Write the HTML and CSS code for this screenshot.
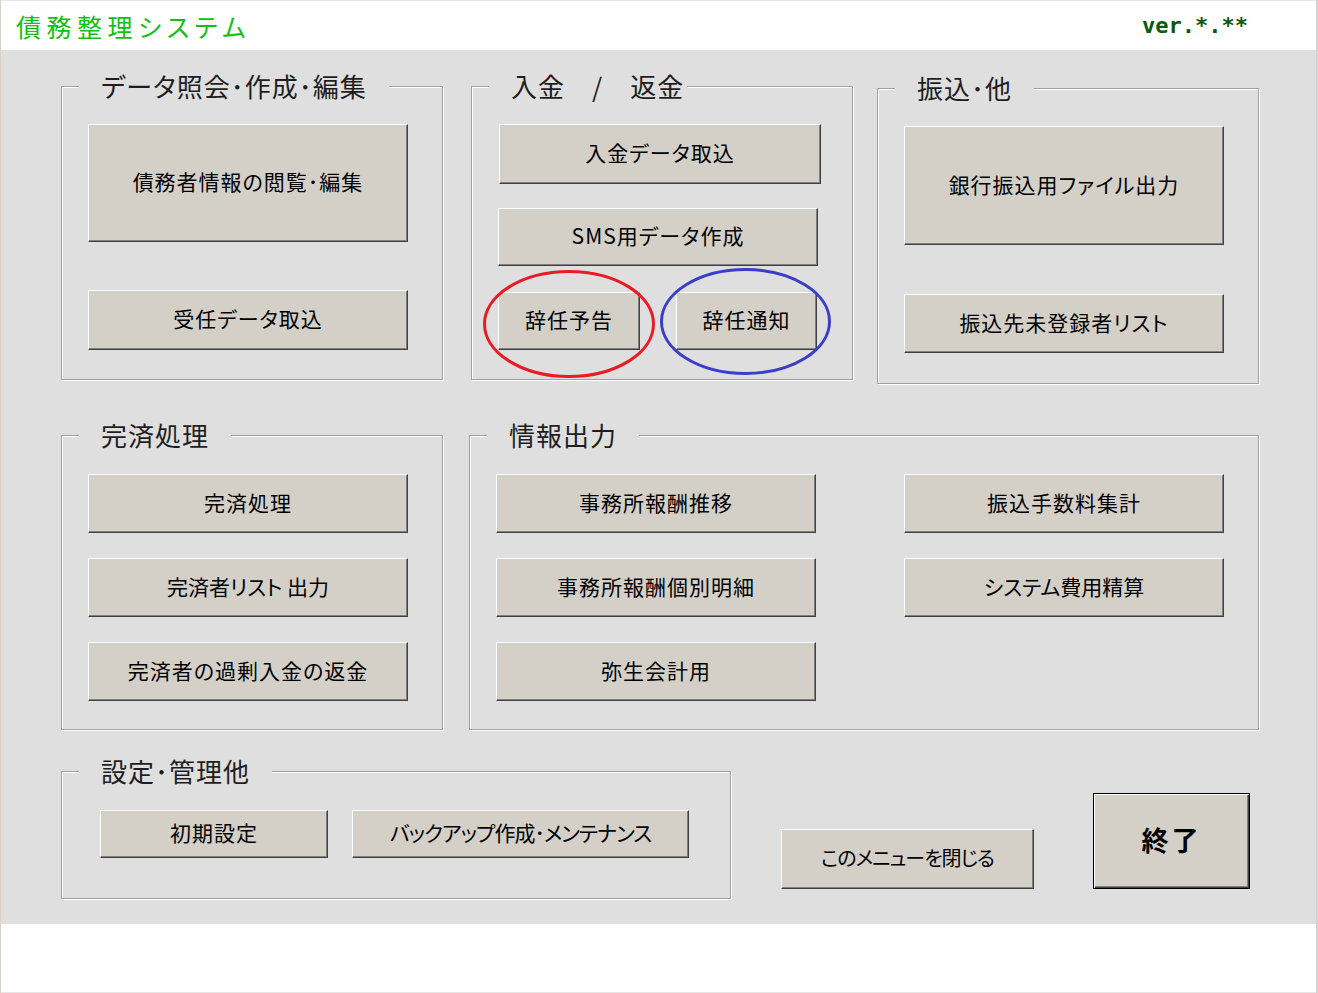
FILE: index.html
```html
<!DOCTYPE html>
<html lang="ja">
<head>
<meta charset="utf-8">
<title>債務整理システム</title>
<link rel="stylesheet" href="styles.css">
</head>
<body>
<div class="app">
  <header class="header">
    <h1 class="title">債務整理システム</h1>
    <span class="ver">ver.*.**</span>
  </header>
  <main class="main">
    <div class="row row1">
      <section class="group g1">
        <span class="legend">データ照会･作成･編集</span>
        <button class="btn w320 h118">債務者情報の閲覧･編集</button>
        <button class="btn w320 h60 mt48">受任データ取込</button>
      </section>
      <section class="group g2">
        <span class="legend legend-tight">入金　/　返金</span>
        <button class="btn w322 h60 ml1">入金データ取込</button>
        <button class="btn w320 h58 mt24">SMS用データ作成</button>
        <div class="pair">
          <button class="btn w142 h58">辞任予告</button>
          <button class="btn w141 h58">辞任通知</button>
        </div>
        <svg class="marks" width="400" height="320" viewBox="0 0 400 320">
          <ellipse cx="98" cy="238" rx="84.5" ry="52.5" fill="none" stroke="#e81c24" stroke-width="3"/>
          <ellipse cx="274.5" cy="235.5" rx="84" ry="52" fill="none" stroke="#3a3ec8" stroke-width="3"/>
        </svg>
      </section>
      <section class="group g3">
        <span class="legend">振込･他</span>
        <button class="btn w320 h119">銀行振込用ファイル出力</button>
        <button class="btn w320 h59 mt49">振込先未登録者リスト</button>
      </section>
    </div>
    <div class="row row2">
      <section class="group g4">
        <span class="legend">完済処理</span>
        <div class="stack">
          <button class="btn w320 h59">完済処理</button>
          <button class="btn w320 h59 snug">完済者リスト 出力</button>
          <button class="btn w320 h59">完済者の過剰入金の返金</button>
        </div>
      </section>
      <section class="group g5">
        <span class="legend">情報出力</span>
        <div class="grid2">
          <button class="btn w320 h59">事務所報酬推移</button>
          <button class="btn w320 h59">振込手数料集計</button>
          <button class="btn w320 h59">事務所報酬個別明細</button>
          <button class="btn w320 h59 snug">システム費用精算</button>
          <button class="btn w320 h59">弥生会計用</button>
        </div>
      </section>
    </div>
    <div class="row row3">
      <section class="group g6">
        <span class="legend">設定･管理他</span>
        <div class="pair6">
          <button class="btn w228 h48">初期設定</button>
          <button class="btn w337 h48 tight">バックアップ作成･メンテナンス</button>
        </div>
      </section>
      <button class="btn close tight">このメニューを閉じる</button>
      <button class="btn btn-default quit">終了</button>
    </div>
  </main>
  <div class="footer"></div>
</div>
</body>
</html>
```
FILE: styles.css
```css
* { box-sizing: border-box; }
html, body { margin: 0; padding: 0; background: #fff; }
body {
  font-family: "Noto Sans CJK JP", "Noto Sans", sans-serif;
  font-feature-settings: "palt";
}
.app {
  width: 1318px;
  height: 993px;
  border-left: 1px solid #d6d2ca;
  border-right: 2px solid #d6d2ca;
  display: flex;
  flex-direction: column;
}
.header {
  height: 50px;
  border-top: 1px solid #e6e6e6;
  background: #fff;
  display: flex;
  align-items: center;
  justify-content: space-between;
  padding: 0 68px 0 15px;
}
.title {
  margin: 0;
  font-size: 25px;
  font-weight: normal;
  letter-spacing: 5.5px;
  color: #12c012;
  line-height: 30px;
}
.ver {
  font-family: "DejaVu Sans Mono", "Liberation Mono", monospace;
  font-weight: bold;
  font-size: 22px;
  line-height: 26px;
  color: #0b5a0b;
  font-feature-settings: normal;
  white-space: nowrap;
}
.main {
  height: 874px;
  background: #dfdfdf;
  padding: 36px 0 0 60px;
}
.row { display: flex; align-items: flex-start; }
.row2 { margin-top: 51px; }
.row3 { margin-top: 41px; }

.group {
  position: relative;
  border: 1px solid #a0a0a0;
  box-shadow: inset 1px 1px 0 #fff, 1px 1px 0 #fff;
  padding: 37px 0 0 26px;
  display: flex;
  flex-direction: column;
  align-items: flex-start;
}
.legend {
  position: absolute;
  left: 17px;
  top: -16px;
  padding: 0 22px;
  background: #dfdfdf;
  font-size: 26px;
  line-height: 30px;
  letter-spacing: 1px;
  color: #1e1e1e;
  white-space: pre;
}
.legend-tight { padding-right: 3px; }
.g1 { width: 382px; height: 294px; }
.g2 { width: 382px; height: 294px; margin-left: 28px; }
.g3 { width: 382px; height: 296px; margin-left: 24px; margin-top: 2px; }
.g4 { width: 382px; height: 295px; padding-top: 38px; }
.g5 { width: 790px; height: 295px; margin-left: 26px; padding-top: 38px; }
.g6 { width: 670px; height: 128px; padding: 38px 0 0 38px; }

.btn {
  font-family: "Noto Sans CJK JP", "Noto Sans", sans-serif;
  font-feature-settings: "palt";
  font-size: 21px;
  letter-spacing: 1px;
  color: #000;
  background: #d4d0c8;
  border: 1px solid;
  border-color: #fff #404040 #404040 #fff;
  box-shadow: inset -1px -1px 0 #808080;
  padding: 0 0 3px 0;
  margin: 0;
  display: flex;
  align-items: center;
  justify-content: center;
  white-space: nowrap;
  line-height: 1;
}
.snug { letter-spacing: 0; }
.tight { letter-spacing: -1px; }
.w320 { width: 320px; }
.w322 { width: 322px; }
.w142 { width: 142px; }
.w141 { width: 141px; }
.w228 { width: 228px; }
.w337 { width: 337px; }
.h118 { height: 118px; }
.h119 { height: 119px; }
.h60 { height: 60px; }
.h59 { height: 59px; }
.h58 { height: 58px; }
.h48 { height: 48px; }
.mt48 { margin-top: 48px; }
.mt49 { margin-top: 49px; }
.mt24 { margin-top: 24px; }
.ml1 { margin-left: 1px; }

.pair { display: flex; gap: 36px; margin-top: 26px; }
.marks {
  position: absolute;
  left: -1px;
  top: -1px;
  pointer-events: none;
  overflow: visible;
}
.stack { display: flex; flex-direction: column; gap: 25px; }
.grid2 {
  display: grid;
  grid-template-columns: 320px 320px;
  column-gap: 88px;
  row-gap: 25px;
}
.pair6 { display: flex; gap: 24px; }

.close {
  width: 253px;
  height: 60px;
  margin: 58px 0 0 50px;
  font-size: 20px;
}
.btn-default {
  border: 1px solid #000;
  box-shadow: inset 1px 1px 0 #fff, inset -1px -1px 0 #404040, inset -2px -2px 0 #808080;
}
.quit {
  width: 157px;
  height: 96px;
  margin: 22px 0 0 59px;
  font-size: 27px;
  font-weight: bold;
  letter-spacing: 3px;
}
.footer {
  flex: 1;
  background: #fff;
  border-bottom: 1px solid #e6e6e6;
}
```
